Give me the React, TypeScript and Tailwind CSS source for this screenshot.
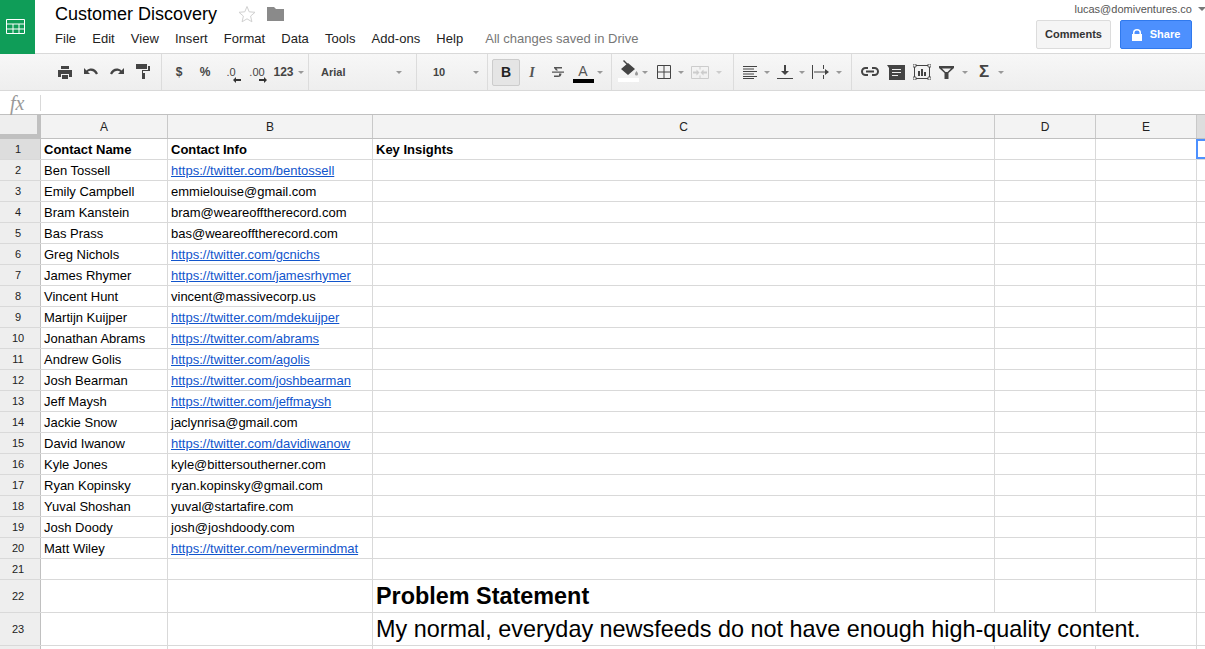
import type { ReactNode } from "react";

const contacts: [string, string, boolean][] = [
  ["Ben Tossell", "https://twitter.com/bentossell", true],
  ["Emily Campbell", "emmielouise@gmail.com", false],
  ["Bram Kanstein", "bram@weareofftherecord.com", false],
  ["Bas Prass", "bas@weareofftherecord.com", false],
  ["Greg Nichols", "https://twitter.com/gcnichs", true],
  ["James Rhymer", "https://twitter.com/jamesrhymer", true],
  ["Vincent Hunt", "vincent@massivecorp.us", false],
  ["Martijn Kuijper", "https://twitter.com/mdekuijper", true],
  ["Jonathan Abrams", "https://twitter.com/abrams", true],
  ["Andrew Golis", "https://twitter.com/agolis", true],
  ["Josh Bearman", "https://twitter.com/joshbearman", true],
  ["Jeff Maysh", "https://twitter.com/jeffmaysh", true],
  ["Jackie Snow", "jaclynrisa@gmail.com", false],
  ["David Iwanow", "https://twitter.com/davidiwanow", true],
  ["Kyle Jones", "kyle@bittersoutherner.com", false],
  ["Ryan Kopinsky", "ryan.kopinsky@gmail.com", false],
  ["Yuval Shoshan", "yuval@startafire.com", false],
  ["Josh Doody", "josh@joshdoody.com", false],
  ["Matt Wiley", "https://twitter.com/nevermindmat", true],
];

const menus = ["File", "Edit", "View", "Insert", "Format", "Data", "Tools", "Add-ons", "Help"];

function Caret({ light = false }: { light?: boolean }) {
  return (
    <span
      className={`inline-block h-0 w-0 border-x-[3px] border-t-[3px] border-x-transparent ${
        light ? "border-t-[#cccccc]" : "border-t-[#999999]"
      }`}
    />
  );
}

function Tool({ children, className = "w-[26px]" }: { children: ReactNode; className?: string }) {
  return <div className={`flex h-full shrink-0 items-center justify-center ${className}`}>{children}</div>;
}

function Icon({ children, size = 18 }: { children: ReactNode; size?: number }) {
  return (
    <svg width={size} height={size} viewBox="0 0 18 18" fill="#444444" aria-hidden>
      {children}
    </svg>
  );
}

function Section({ children, className }: { children: ReactNode; className: string }) {
  return <div className={`flex h-full shrink-0 items-center border-r border-[#dcdcdc] ${className}`}>{children}</div>;
}

function Toolbar() {
  return (
    <div className="flex h-[37px] shrink-0 items-center border-b border-[#d9d9d9] bg-linear-to-b from-[#f7f7f7] to-[#eeeeee] text-[#444444]">
      <Section className="w-[162px] pl-[52px]">
        <Tool>
          <Icon>
            <path d="M5 3h8v3H5z M2 7h14v7h-3v-3H5v3H2z M6 12h6v4H6z" />
          </Icon>
        </Tool>
        <Tool>
          <Icon>
            <path d="M2 5v6h6L5.800 8.800C7.900 7.200 11.500 7.400 14 11.500l2-1C13.500 5 8.500 4.200 4.500 7.500z" />
          </Icon>
        </Tool>
        <Tool>
          <Icon>
            <path d="M16 5v6h-6l2.200-2.200C10.100 7.200 6.500 7.400 4 11.500l-2-1C4.500 5 9.500 4.200 13.500 7.500z" />
          </Icon>
        </Tool>
        <Tool>
          <Icon>
            <path d="M2 1h11v5H2z M14 3h2v5H9v2h2v6H8V7h6z" />
          </Icon>
        </Tool>
      </Section>
      <Section className="w-[147px] pl-[4px] text-[12px] font-bold">
        <Tool>$</Tool>
        <Tool>%</Tool>
        <Tool>
          <div className="relative text-[11px] font-normal">
            .0
            <svg className="absolute top-[13px] left-[7px]" width="8" height="6" viewBox="0 0 8 6" fill="#333333" aria-hidden>
              <path d="M0 3 3 0v2h5v2H3v2z" />
            </svg>
          </div>
        </Tool>
        <Tool>
          <div className="relative text-[11px] font-normal">
            .00
            <svg className="absolute top-[13px] left-[10px]" width="8" height="6" viewBox="0 0 8 6" fill="#333333" aria-hidden>
              <path d="M8 3 5 0v2H0v2h5v2z" />
            </svg>
          </div>
        </Tool>
        <Tool className="ml-[1px] w-[27px] gap-[4px]">
          <span className="ml-[8px]">123</span>
          <Caret />
        </Tool>
      </Section>
      <Section className="w-[108px] justify-between pr-[14px] pl-[12px] text-[11px] font-bold">
        <span>Arial</span>
        <Caret />
      </Section>
      <Section className="w-[71px] justify-between pr-[8px] pl-[16px] text-[11px] font-bold">
        <span>10</span>
        <Caret />
      </Section>
      <Section className="w-[124px] pl-[4px]">
        <Tool className="h-[27px]! w-[28px] rounded-[2px] border border-[#cccccc] bg-[#e5e5e5] text-[14px] font-bold text-[#222222]">
          B
        </Tool>
        <Tool className="ml-[-1px] w-[26px]">
          <span className="text-[14px] font-bold text-[#555555] italic" style={{ fontFamily: '"Liberation Serif", serif' }}>
            I
          </span>
        </Tool>
        <Tool>
          <Icon>
            <path d="M5 4h8v1.500H7.500L9 7.500H7L5 5z M3 8.500h12v1.200H3z M10 10.500h2.500c0 2.500-1.500 3.500-3.500 3.500H5v-1.500h5z" fill="#555555" />
          </Icon>
        </Tool>
        <Tool className="w-[24px]">
          <div className="relative flex h-[27px] w-[21px] flex-col items-center">
            <span className="mt-[4px] text-[14px] leading-[16px] font-normal text-[#555555]">A</span>
            <span className="absolute top-[20px] h-[4px] w-[21px] bg-black" />
          </div>
        </Tool>
        <Tool className="w-[10px]">
          <Caret />
        </Tool>
      </Section>
      <Section className="w-[122px] pl-[4px]">
        <Tool className="w-[24px]">
          <div className="relative h-[27px] w-[21px]">
            <svg className="absolute top-[1px] left-0" width="21" height="18" viewBox="0 0 21 18" fill="#444444" aria-hidden>
              <path d="M3 9 10 3l7 6-7 6z M5 1l1-1 4 4-1 1z" />
              <path d="M18.500 11c1 1.500 1.500 2.200 1.500 3a1.500 1.500 0 0 1-3 0c0-.8.500-1.500 1.500-3z" fill="#999999" />
            </svg>
            <span className="absolute top-[19px] left-0 h-[4px] w-[21px] bg-white" />
          </div>
        </Tool>
        <Tool className="w-[10px]">
          <Caret />
        </Tool>
        <Tool className="ml-[2px] w-[24px]">
          <svg width="14" height="14" viewBox="0 0 14 14" fill="none" stroke="#444444" aria-hidden>
            <path d="M.5.500h13v13H.5z M7 .5v13 M.5 7h13" />
          </svg>
        </Tool>
        <Tool className="w-[10px]">
          <Caret />
        </Tool>
        <Tool className="ml-[2px] w-[24px]">
          <svg width="18" height="13" viewBox="0 0 18 13" fill="none" stroke="#cccccc" aria-hidden>
            <path d="M.5.500h17v12H.5z M9 .5v3 M9 9.500v3" />
            <path d="M2 5.500h3.500V3.500l3 3-3 3v-2H2z M16 5.500h-3.500V3.500l-3 3 3 3v-2H16z" fill="#cccccc" stroke="none" />
          </svg>
        </Tool>
        <Tool className="w-[14px]">
          <Caret light />
        </Tool>
      </Section>
      <Section className="w-[118px] pl-[4px]">
        <Tool className="w-[24px]">
          <svg width="14" height="13" viewBox="0 0 14 13" fill="none" stroke="#444444" aria-hidden>
            <path d="M0 .5h14 M0 3h11 M0 5.500h14 M0 8h11 M0 10.500h14 M0 12.500h11" />
          </svg>
        </Tool>
        <Tool className="w-[10px]">
          <Caret />
        </Tool>
        <Tool className="w-[26px]">
          <svg width="16" height="14" viewBox="0 0 16 14" fill="#444444" aria-hidden>
            <path d="M7 0h2v6h3l-4 4-4-4h3z M0 13h16v1H0z" />
          </svg>
        </Tool>
        <Tool className="w-[8px]">
          <Caret />
        </Tool>
        <Tool className="ml-[1px] w-[28px]">
          <svg width="18" height="14" viewBox="0 0 18 14" fill="#444444" aria-hidden>
            <path d="M0 0h1v14H0z M11 0h1v4h-1z M11 10h1v4h-1z M2 6.500h11V4l4 3-4 3V7.500H2z" />
          </svg>
        </Tool>
        <Tool className="w-[7px]">
          <Caret />
        </Tool>
      </Section>
      <div className="flex h-full items-center pl-[5px]">
        <Tool>
          <svg width="18" height="10" viewBox="0 0 18 10" fill="none" stroke="#444444" strokeWidth="2" aria-hidden>
            <path d="M7 1H4.500a3.500 3.500 0 0 0 0 7H7 M11 1h2.500a3.500 3.500 0 0 1 0 7H11 M5 4.500h8" />
          </svg>
        </Tool>
        <Tool>
          <svg width="18" height="15" viewBox="0 0 18 15" aria-hidden>
            <path d="M0 0h18v15H2V3z" fill="#444444" />
            <path d="M5 4h9v1H5z M5 7h9v1H5z M5 10h6v1H5z" fill="#eeeeee" />
          </svg>
        </Tool>
        <Tool className="mr-[-2px] w-[26px]">
          <svg width="18" height="16" viewBox="0 0 18 16" aria-hidden>
            <path d="M1.500 1.500h15v13h-15z" fill="none" stroke="#444444" />
            <path d="M0 0h3v3H0z M15 0h3v3h-3z M0 13h3v3H0z M15 13h3v3h-3z" fill="#f2f2f2" stroke="#444444" strokeWidth=".8" />
            <path d="M5 7h2v5H5z M8 5h2v7H8z M11 8h2v4h-2z" fill="#444444" />
          </svg>
        </Tool>
        <Tool>
          <svg width="15" height="13" viewBox="0 0 15 13" fill="#444444" aria-hidden>
            <path d="M0 0h15v2L9.500 7v6h-4V7L0 2zM3 2.500 6.500 6h2L12 2.500z" fillRule="evenodd" />
          </svg>
        </Tool>
        <Tool className="w-[12px]">
          <Caret />
        </Tool>
        <Tool className="w-[26px]">
          <span className="text-[17px] font-bold text-[#444444]">Σ</span>
        </Tool>
        <Tool className="w-[8px]">
          <Caret />
        </Tool>
      </div>
    </div>
  );
}

function RowHead({ children, active = false }: { children: ReactNode; active?: boolean }) {
  return (
    <div
      className={`flex w-[41px] shrink-0 items-center justify-center border-r border-[#c0c0c0] pt-px pr-[4px] text-[11px] font-normal text-[#222222] ${
        active ? "bg-[#dddddd]" : "bg-[#eeeeee]"
      }`}
    >
      {children}
    </div>
  );
}

function Cell({ children, className }: { children?: ReactNode; className: string }) {
  return (
    <div className={`flex shrink-0 items-center overflow-hidden border-r border-[#d9d9d9] px-[3px] pt-px whitespace-nowrap ${className}`}>
      {children}
    </div>
  );
}

function Row({
  num,
  a,
  b,
  c,
  link = false,
  bold = false,
}: {
  num: number;
  a?: string;
  b?: string;
  c?: string;
  link?: boolean;
  bold?: boolean;
}) {
  return (
    <div className={`flex h-[21px] overflow-hidden border-b border-[#d9d9d9] text-[13px] text-black ${bold ? "font-bold" : ""}`}>
      <RowHead active={num === 1}>{num}</RowHead>
      <Cell className="w-[127px]">{a}</Cell>
      <Cell className="w-[205px]">{link ? <span className="text-[#1155cc] underline">{b}</span> : b}</Cell>
      <Cell className="w-[622px]">{c}</Cell>
      <Cell className="w-[101px]" />
      <Cell className="w-[101px]" />
      <div className={`flex-1 ${num === 1 ? "mr-[-4px] ml-[-1px] border-2 border-[#4d90fe]" : ""}`} />
    </div>
  );
}

export default function App() {
  return (
    <div
      className="flex h-[649px] w-[1205px] flex-col overflow-hidden bg-white"
      style={{ fontFamily: '"Liberation Sans", Arial, sans-serif' }}
    >
      {/* doc header */}
      <header className="flex h-[54px] shrink-0 border-b border-[#d9d9d9]">
        <div className="flex h-[54px] w-[35px] items-center justify-center bg-[#0f9d58] pr-[3px]">
          <svg width="20" height="16" viewBox="0 0 20 16" fill="none" stroke="white" aria-hidden>
            <path d="M.5.500h18v14H.5z M.5 5h18 M.5 10h18 M7 5v9.500 M13 5v9.500" />
          </svg>
        </div>
        <div className="flex flex-1 flex-col pt-[2px] pl-[20px]">
          <div className="flex h-[24px] items-center">
            <span className="text-[18px] leading-[24px] text-black">Customer Discovery</span>
            <svg className="ml-[21px]" width="18" height="18" viewBox="0 0 18 18" fill="none" stroke="#d0d0d0" aria-hidden>
              <path d="M9 1.500 11.200 6.800l5.800.5-4.400 3.800 1.300 5.700L9 13.800l-4.900 3 1.300-5.700L1 7.300l5.800-.5z" />
            </svg>
            <svg className="ml-[11px]" width="17" height="14" viewBox="0 0 17 14" fill="#8a8a8a" aria-hidden>
              <path d="M0 0h7l2 2h8v12H0z" />
            </svg>
          </div>
          <nav className="mt-[3px] flex items-center text-[13px] text-[#222222]">
            <div className="flex gap-[16px] tracking-[0.05px]">
              {menus.map((m) => (
                <span key={m}>{m}</span>
              ))}
            </div>
            <span className="ml-[22px] text-[#777777]">All changes saved in Drive</span>
          </nav>
        </div>
        <div className="flex w-[169px] flex-col items-end pr-[13px]">
          <div className="mt-px flex h-[16px] items-center text-[11px] text-[#555555]">
            lucas@domiventures.co
          </div>
          <div className="mt-[3px] flex gap-[9px]">
            <button className="h-[29px] w-[75px] rounded-[2px] border border-[#dcdcdc] bg-[#f5f5f5] text-[11px] font-bold text-[#333333]">
              Comments
            </button>
            <button className="flex h-[29px] w-[72px] items-center justify-center gap-[8px] rounded-[2px] border border-[#3079ed] bg-[#4d90fe] text-[11px] font-bold text-white">
              <svg width="10" height="12" viewBox="0 0 10 12" fill="white" aria-hidden>
                <path d="M0 5h1V3.500a4 3.500 0 0 1 8 0V5h1v7H0zM2.500 5h5V3.500a2.500 2 0 0 0-5 0z" fillRule="evenodd" />
              </svg>
              Share
            </button>
          </div>
        </div>
        <span className="absolute top-[7px] left-[1198px] h-0 w-0 border-x-[4px] border-t-[4px] border-x-transparent border-t-[#777777]" />
      </header>

      <Toolbar />

      {/* formula bar */}
      <div className="flex h-[24px] shrink-0 items-center border-b border-[#c0c0c0] bg-white">
        <div className="flex h-full w-[40px] items-center">
          <span className="ml-[10px] text-[20px] text-[#999999] italic" style={{ fontFamily: '"Liberation Serif", serif' }}>
            fx
          </span>
        </div>
        <span className="h-[16px] w-px bg-[#d9d9d9]" />
      </div>

      {/* column headers */}
      <div className="flex h-[24px] shrink-0 border-b border-[#c0c0c0] bg-[#f3f3f3] text-[12px] text-[#222222]">
        <div className="w-[41px] shrink-0 border-r-[4px] border-b-[4px] border-[#c0c0c0] bg-[#eeeeee]" />
        <div className="flex w-[127px] items-center justify-center border-r border-[#c9c9c9]">A</div>
        <div className="flex w-[205px] items-center justify-center border-r border-[#c9c9c9]">B</div>
        <div className="flex w-[622px] items-center justify-center border-r border-[#c9c9c9]">C</div>
        <div className="flex w-[101px] items-center justify-center border-r border-[#c9c9c9]">D</div>
        <div className="flex w-[101px] items-center justify-center border-r border-[#c9c9c9]">E</div>
        <div className="flex-1 bg-[#dddddd]" />
      </div>

      {/* sheet */}
      <div className="min-h-0 flex-1">
        <Row num={1} a="Contact Name" b="Contact Info" c="Key Insights" bold />
        {contacts.map(([name, info, link], i) => (
          <Row key={name} num={i + 2} a={name} b={info} link={link} />
        ))}
        <Row num={21} />
        <div className="flex h-[33px] border-b border-[#d9d9d9]">
          <RowHead>22</RowHead>
          <Cell className="w-[127px]" />
          <Cell className="w-[205px]" />
          <Cell className="w-[622px] text-[23.4px] font-bold text-black">Problem Statement</Cell>
          <Cell className="w-[101px]" />
          <Cell className="w-[101px]" />
        </div>
        <div className="flex h-[33px] border-b border-[#d9d9d9]">
          <RowHead>23</RowHead>
          <Cell className="w-[127px]" />
          <Cell className="w-[205px]" />
          <Cell className="w-[824px] text-[23.4px] text-black">
            My normal, everyday newsfeeds do not have enough high-quality content.
          </Cell>
        </div>
        <div className="flex h-[10px]">
          <RowHead>{""}</RowHead>
          <Cell className="w-[127px]" />
          <Cell className="w-[205px]" />
          <Cell className="w-[622px]" />
          <Cell className="w-[101px]" />
          <Cell className="w-[101px]" />
        </div>
      </div>
    </div>
  );
}
